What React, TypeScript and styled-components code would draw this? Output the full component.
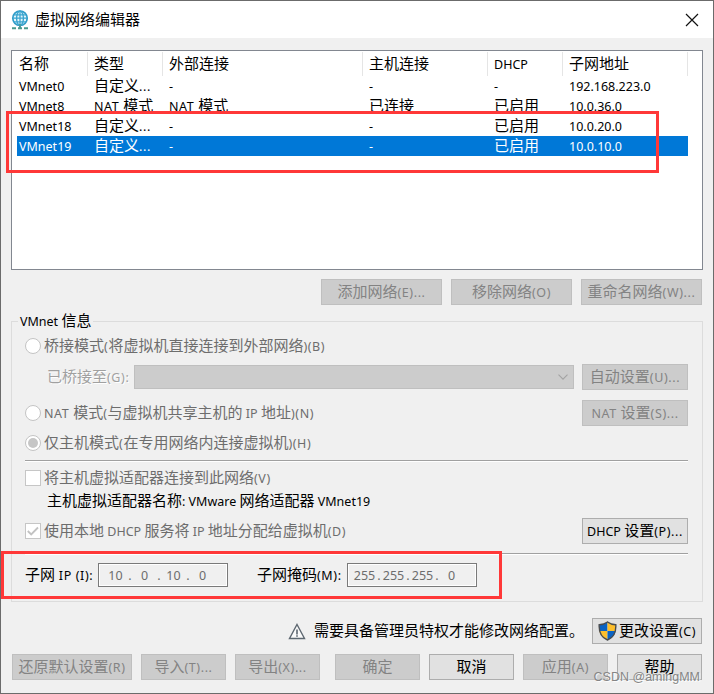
import React from "react";
import styled, { createGlobalStyle, css } from "styled-components";

const GlobalStyle = createGlobalStyle`
  *, *::before, *::after { box-sizing: border-box; }
  html, body { margin: 0; padding: 0; background: #f0f0f0; overflow: hidden; }
`;

const LATIN = `"Noto Sans", "Open Sans", sans-serif`;
const CJK = `"Noto Sans CJK SC", sans-serif`;

/* ---------- text ---------- */

const Line = styled.span<{ $color?: string }>`
  display: inline-block;
  height: 20px;
  line-height: 22px;
  white-space: pre;
  font-family: ${LATIN};
  font-size: 12.5px;
  color: ${(p) => p.$color ?? "#000"};
`;

const Han = styled.span`
  font-family: ${CJK};
  font-size: 15px;
  font-weight: 400;
  line-height: 0;
`;

const Roman = styled.span<{ $loose: boolean }>`
  letter-spacing: ${(p) => (p.$loose ? 0.6 : 0)}px;
`;

function Text({ children, color }: { children: string; color?: string }) {
  const runs = children.match(/[\u3000-\u9fff]+|[^\u3000-\u9fff]+/g) ?? [];
  return (
    <Line $color={color}>
      {runs.map((run, i) =>
        /[\u3000-\u9fff]/.test(run) ? (
          <Han key={i}>{run}</Han>
        ) : (
          <Roman key={i} $loose={/[()]|\.\.\.|^NAT $/.test(run)}>{run}</Roman>
        ),
      )}
    </Line>
  );
}

/* ---------- window ---------- */

const Window = styled.main`
  position: relative;
  width: 714px;
  height: 694px;
  border: 1px solid #6b6b6b;
  background: #f0f0f0;
  overflow: hidden;
`;

const TitleBar = styled.header`
  display: flex;
  align-items: center;
  height: 37px;
  padding: 0 14px 0 10px;
  gap: 6px;
  background: #fff;
  svg:last-child { margin-left: auto; }
`;

/* ---------- network list ---------- */

const List = styled.section`
  width: 692px;
  height: 220px;
  margin: 12px 0 0 10px;
  padding: 1px 0 0 5px;
  border: 1px solid #828790;
  background: #fff;
`;

const columns = css`
  display: grid;
  grid-template-columns: 71px 75px 200px 125px 75px 125px;
  width: 671px;
`;

const ListHead = styled.div`
  ${columns}
  height: 24px;
`;

const HeadCell = styled.div`
  display: flex;
  align-items: center;
  padding-left: 6px;
  border-right: 1px solid #e5e5e5;
  &:first-child { padding-left: 2px; }
`;

const ListRow = styled.div<{ $selected?: boolean }>`
  ${columns}
  height: 20px;
  background: ${(p) => (p.$selected ? "#0078d7" : "transparent")};
`;

const Cell = styled.div`
  padding-left: 6px;
  &:first-child { padding-left: 2px; }
`;

const networks = [
  ["VMnet0", "自定义...", "-", "-", "-", "192.168.223.0"],
  ["VMnet8", "NAT 模式", "NAT 模式", "已连接", "已启用", "10.0.36.0"],
  ["VMnet18", "自定义...", "-", "-", "已启用", "10.0.20.0"],
  ["VMnet19", "自定义...", "-", "-", "已启用", "10.0.10.0"],
];

/* ---------- controls ---------- */

const ButtonBox = styled.button<{ $w: number }>`
  display: flex;
  align-items: center;
  justify-content: center;
  flex: none;
  width: ${(p) => p.$w}px;
  height: 26px;
  padding: 0;
  border: 1px solid #adadad;
  background: #e1e1e1;
  &:disabled { border-color: #bfbfbf; background: #ccc; }
`;

type ButtonProps = { w: number; label: string; disabled?: boolean; icon?: React.ReactNode };

function Button({ w, label, disabled, icon }: ButtonProps) {
  return (
    <ButtonBox $w={w} disabled={disabled}>
      {icon}
      <Text color={disabled ? "#838383" : "#000"}>{label}</Text>
    </ButtonBox>
  );
}

const ListActions = styled.div`
  display: flex;
  justify-content: flex-end;
  gap: 9px;
  margin: 9px 11px 0 0;
`;

const Group = styled.fieldset`
  width: 692px;
  height: 291px;
  margin: 6px 0 0 10px;
  padding: 0 14px 0 13px;
  border: 1px solid #dcdcdc;
  min-width: 0;
`;

const Legend = styled.legend`
  height: 20px;
  margin-left: -7px;
  padding: 0 2px;
`;

const Row = styled.div<{ $h: number; $indent?: number; $top?: number }>`
  display: flex;
  align-items: center;
  height: ${(p) => p.$h}px;
  margin-top: ${(p) => p.$top ?? 0}px;
  padding-left: ${(p) => p.$indent ?? 0}px;
  > button { margin-left: auto; }
`;

const Radio = styled.span<{ $checked?: boolean }>`
  display: grid;
  place-items: center;
  flex: none;
  width: 16px;
  height: 16px;
  margin-right: 3px;
  border: 1px solid #c4c4c4;
  border-radius: 50%;
  background: #fff;
  &::after {
    content: "";
    width: 10px;
    height: 10px;
    border-radius: 50%;
    background: ${(p) => (p.$checked ? "#c6c6c6" : "transparent")};
  }
`;

const CheckBox = styled.span`
  display: grid;
  place-items: center;
  flex: none;
  width: 16px;
  height: 16px;
  margin-right: 3px;
  border: 1px solid #c6c6c6;
  background: #fff;
`;

const Select = styled.div`
  display: flex;
  align-items: center;
  justify-content: flex-end;
  width: 440px;
  height: 24px;
  padding-right: 5px;
  border: 1px solid #bfbfbf;
  background: #ccc;
`;

const BridgeLabel = styled.div`
  width: 87px;
  height: 20px;
  text-shadow: 1px 1px 0 #fff;
`;

const Rule = styled.hr<{ $top: number }>`
  height: 2px;
  margin: ${(p) => p.$top}px 0 0;
  border: 0;
  border-top: 1px solid #a0a0a0;
  border-bottom: 1px solid #fff;
`;

const SubnetLabel = styled.div<{ $w: number; $indent?: number }>`
  width: ${(p) => p.$w}px;
  height: 20px;
  padding-left: ${(p) => p.$indent ?? 0}px;
`;

const AddressBox = styled.div<{ $pad: number }>`
  display: grid;
  grid-template-columns: 25px 4px 25px 4px 25px 4px 25px;
  justify-items: center;
  align-items: center;
  justify-content: start;
  width: 130px;
  height: 24px;
  padding-left: ${(p) => p.$pad}px;
  border: 1px solid #7a7a7a;
  box-shadow: inset 0 0 0 1px #fff;
`;

function Address({ value, pad }: { value: string; pad: number }) {
  return (
    <AddressBox $pad={pad}>
      {value.split(/(\.)/).map((part, i) => (
        <Text key={i} color="#6d6d6d">{part}</Text>
      ))}
    </AddressBox>
  );
}

const Notice = styled.div`
  display: flex;
  align-items: center;
  height: 26px;
  margin: 16px 11px 0 287px;
  > svg { margin-right: 8px; }
  > button { margin-left: auto; }
  > button svg { margin-right: 2px; }
`;

const Footer = styled.footer`
  display: flex;
  gap: 9px;
  margin: 10px 11px 0 11px;
  > :nth-child(4) { margin-left: 6px; }
`;

const Highlight = styled.div<{ $x: number; $y: number; $w: number; $h: number }>`
  position: absolute;
  left: ${(p) => p.$x}px;
  top: ${(p) => p.$y}px;
  width: ${(p) => p.$w}px;
  height: ${(p) => p.$h}px;
  border: 3px solid #ff3838;
  pointer-events: none;
`;

const Watermark = styled.div`
  position: absolute;
  right: 13px;
  bottom: 7px;
  font: 12.5px/18px "Liberation Sans", sans-serif;
  color: #858585;
  text-shadow: 1px 1px 1px #fff;
  white-space: pre;
`;

/* ---------- drawings ---------- */

const GlobeIcon = () => (
  <svg width="18" height="20" viewBox="0 0 18 20" fill="none">
    <circle cx="9" cy="8.2" r="7.2" fill="#e5f5fb" stroke="#2f9cc8" strokeWidth="1.7" />
    <ellipse cx="9" cy="8.2" rx="3.4" ry="7.2" stroke="#3aa5cf" strokeWidth="1.4" />
    <path d="M9 1v14.500M1.500 8.200h15M2.600 4.800h12.800M2.600 11.800h12.800" stroke="#3aa5cf" strokeWidth="1.3" />
    <path d="M9 14v4" stroke="#4a9a9d" strokeWidth="2" />
    <path d="M1 18.300h4M7 18.300h4M13 18.300h4" stroke="#4a9a8d" strokeWidth="2" />
  </svg>
);

const CloseIcon = () => (
  <svg width="14" height="14" viewBox="0 0 14 14">
    <path d="M1 1l12 12M13 1L1 13" stroke="#111" strokeWidth="1.2" />
  </svg>
);

const ChevronIcon = () => (
  <svg width="10" height="6" viewBox="0 0 10 6" fill="none">
    <path d="M.5 .7L5 5.2L9.5 .7" stroke="#a3a3a3" strokeWidth="1.1" />
  </svg>
);

const CheckIcon = () => (
  <svg width="12" height="10" viewBox="0 0 12 10" fill="none">
    <path d="M.8 5l3.400 3.500L11 1.500" stroke="#c2c2c2" strokeWidth="1.8" />
  </svg>
);

const WarningIcon = () => (
  <svg width="18" height="17" viewBox="0 0 18 17" fill="none">
    <path d="M9 1.500L16.500 15.500H1.500Z" fill="#fafafa" stroke="#5d6770" strokeWidth="1.4" />
    <path d="M9 6.500v5M9 12.300v1.500" stroke="#5d6770" strokeWidth="1.6" />
  </svg>
);

const ShieldIcon = () => (
  <svg width="19" height="20" viewBox="0 0 19 20">
    <path d="M9.5 1C7 3 4 3.6 1.2 3.7C1.1 6 1.1 8 1.4 10H9.5Z" fill="#0b63c4" />
    <path d="M9.5 1C12 3 15 3.6 17.8 3.7C17.9 6 17.9 8 17.6 10H9.5Z" fill="#fdbf2d" />
    <path d="M1.4 10H9.5V19C4.5 17 2 14 1.4 10Z" fill="#fdbf2d" />
    <path d="M17.6 10H9.5V19C14.5 17 17 14 17.6 10Z" fill="#0b63c4" />
    <path
      d="M9.5 1C7 3 4 3.6 1.2 3.7C.8 11 3 16.5 9.5 19C16 16.5 18.2 11 17.8 3.7C15 3.6 12 3 9.5 1Z"
      fill="none"
      stroke="#4a4d50"
      strokeWidth="1.4"
    />
  </svg>
);

/* ---------- page ---------- */

const MUTED = "#6d6d6d";

export default function App() {
  return (
    <>
      <GlobalStyle />
      <Window>
        <TitleBar>
          <GlobeIcon />
          <Text>虚拟网络编辑器</Text>
          <CloseIcon />
        </TitleBar>

        <List>
          <ListHead>
            {["名称", "类型", "外部连接", "主机连接", "DHCP", "子网地址"].map((h) => (
              <HeadCell key={h}><Text>{h}</Text></HeadCell>
            ))}
          </ListHead>
          {networks.map((row, r) => (
            <ListRow key={row[0]} $selected={r === 3}>
              {row.map((value, c) => (
                <Cell key={c}><Text color={r === 3 ? "#fff" : "#000"}>{value}</Text></Cell>
              ))}
            </ListRow>
          ))}
        </List>

        <ListActions>
          <Button w={121} label="添加网络(E)..." disabled />
          <Button w={121} label="移除网络(O)" disabled />
          <Button w={121} label="重命名网络(W)..." disabled />
        </ListActions>

        <Group>
          <Legend><Text>VMnet 信息</Text></Legend>
          <Row $h={20} $top={5}>
            <Radio />
            <Text color={MUTED}>桥接模式(将虚拟机直接连接到外部网络)(B)</Text>
          </Row>
          <Row $h={26} $top={8} $indent={22}>
            <BridgeLabel><Text color="#a0a0a0">已桥接至(G):</Text></BridgeLabel>
            <Select><ChevronIcon /></Select>
            <Button w={106} label="自动设置(U)..." disabled />
          </Row>
          <Row $h={26} $top={10}>
            <Radio />
            <Text color={MUTED}>NAT 模式(与虚拟机共享主机的 IP 地址)(N)</Text>
            <Button w={106} label="NAT 设置(S)..." disabled />
          </Row>
          <Row $h={20} $top={7}>
            <Radio $checked />
            <Text color={MUTED}>仅主机模式(在专用网络内连接虚拟机)(H)</Text>
          </Row>
          <Rule $top={7} />
          <Row $h={20} $top={6}>
            <CheckBox />
            <Text color={MUTED}>将主机虚拟适配器连接到此网络(V)</Text>
          </Row>
          <Row $h={20} $top={3} $indent={22}>
            <Text>主机虚拟适配器名称: VMware 网络适配器 VMnet19</Text>
          </Row>
          <Row $h={26} $top={7}>
            <CheckBox><CheckIcon /></CheckBox>
            <Text color={MUTED}>使用本地 DHCP 服务将 IP 地址分配给虚拟机(D)</Text>
            <Button w={106} label="DHCP 设置(P)..." />
          </Row>
          <Rule $top={9} />
          <Row $h={24} $top={8}>
            <SubnetLabel $w={73}><Text>子网 IP (I):</Text></SubnetLabel>
            <Address value="10.0.10.0" pad={4} />
            <SubnetLabel $w={119} $indent={29}><Text>子网掩码(M):</Text></SubnetLabel>
            <Address value="255.255.255.0" pad={4} />
          </Row>
        </Group>

        <Notice>
          <WarningIcon />
          <Text>需要具备管理员特权才能修改网络配置。</Text>
          <Button w={110} label="更改设置(C)" icon={<ShieldIcon />} />
        </Notice>

        <Footer>
          <Button w={120} label="还原默认设置(R)" disabled />
          <Button w={85} label="导入(T)..." disabled />
          <Button w={85} label="导出(X)..." disabled />
          <Button w={85} label="确定" disabled />
          <Button w={85} label="取消" />
          <Button w={85} label="应用(A)" disabled />
          <Button w={85} label="帮助" />
        </Footer>

        <Highlight $x={5} $y={110} $w={653} $h={62} />
        <Highlight $x={0} $y={550} $w={501} $h={48} />
        <Watermark>CSDN @amingMM</Watermark>
      </Window>
    </>
  );
}
